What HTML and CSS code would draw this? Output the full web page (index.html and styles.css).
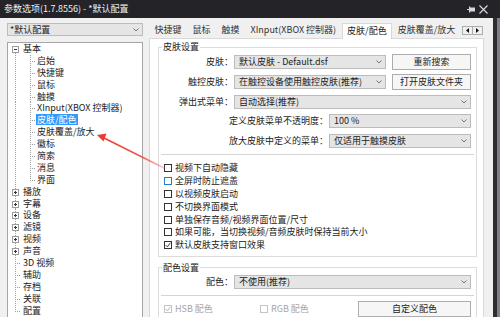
FILE: index.html
```html
<!DOCTYPE html>
<html lang="zh-CN">
<head>
  <meta charset="UTF-8" />
  <meta name="viewport" content="width=device-width, initial-scale=1.0"/>
  <title>参数选项</title>
  <link rel="stylesheet" href="styles.css">
</head>
<body>

  <div class="titlebar">
    <span>参数选项(1.7.8556) - *默认配置</span>
    <span class="caption-btns">
      <svg width="8" height="7" viewBox="0 0 8 7"><path d="M0 3.5h2.5" stroke="#d8d8d8" stroke-width="1"/><rect x="2" y="0.5" width="1.2" height="6" fill="#d8d8d8"/><rect x="3" y="1.5" width="5" height="4" fill="#d8d8d8"/></svg>
      <svg width="9" height="9" viewBox="0 0 9 9"><path d="M0.5 0.5l8 8M8.5 0.5l-8 8" stroke="#dcdcdc" stroke-width="1.1"/></svg>
    </span>
  </div>

  <div class="content">
    <aside class="side">
      <div class="combo profile">
        <span>*默认配置</span>
        <svg class="chev" width="6" height="4" viewBox="0 0 6 4"><path d="M0.5 0.5l2.5 2.5 2.5-2.5" fill="none" stroke="#777"/></svg>
      </div>

      <div class="tree">
        <div class="node open"><i class="exp"></i>基本</div>
        <div class="node sub">启始</div>
        <div class="node sub">快捷键</div>
        <div class="node sub">鼠标</div>
        <div class="node sub">触摸</div>
        <div class="node sub">XInput(XBOX 控制器)</div>
        <div class="node sub"><span class="sel">皮肤/配色</span></div>
        <div class="node sub">皮肤覆盖/放大</div>
        <div class="node sub">徽标</div>
        <div class="node sub">简索</div>
        <div class="node sub">消息</div>
        <div class="node sub end">界面</div>
        <div class="node shut"><i class="exp"></i>播放</div>
        <div class="node shut"><i class="exp"></i>字幕</div>
        <div class="node shut"><i class="exp"></i>设备</div>
        <div class="node shut"><i class="exp"></i>滤镜</div>
        <div class="node shut"><i class="exp"></i>视频</div>
        <div class="node shut"><i class="exp"></i>声音</div>
        <div class="node leaf">3D 视频</div>
        <div class="node leaf">辅助</div>
        <div class="node leaf">存档</div>
        <div class="node leaf">关联</div>
        <div class="node leaf end">配置</div>
      </div>
    </aside>

    <section class="pages">
      <div class="tabs">
        <div class="tab-list">
          <span class="tab">快捷键</span>
          <span class="tab">鼠标</span>
          <span class="tab">触摸</span>
          <span class="tab">XInput(XBOX 控制器)</span>
          <span class="tab active">皮肤/配色</span>
          <span class="tab">皮肤覆盖/放大</span>
        </div>
        <div class="tab-scroll">
          <span><svg width="3" height="5" viewBox="0 0 3 5"><path d="M3 0v5L0 2.5z" fill="#111"/></svg></span>
          <span><svg width="3" height="5" viewBox="0 0 3 5"><path d="M0 0v5l3-2.5z" fill="#111"/></svg></span>
        </div>
      </div>

      <div class="page">
        <fieldset class="group">
          <legend>皮肤设置</legend>
          <div class="rows">
            <div class="row">
              <label>皮肤：</label>
              <div class="combo mid"><span>默认皮肤 - Default.dsf</span><svg class="chev" width="6" height="4" viewBox="0 0 6 4"><path d="M0.5 0.5l2.5 2.5 2.5-2.5" fill="none" stroke="#777"/></svg></div>
              <button class="btn">重新搜索</button>
            </div>
            <div class="row">
              <label>触控皮肤：</label>
              <div class="combo mid"><span>在触控设备使用触控皮肤(推荐)</span><svg class="chev" width="6" height="4" viewBox="0 0 6 4"><path d="M0.5 0.5l2.5 2.5 2.5-2.5" fill="none" stroke="#777"/></svg></div>
              <button class="btn">打开皮肤文件夹</button>
            </div>
            <div class="row">
              <label>弹出式菜单：</label>
              <div class="combo wide"><span>自动选择(推荐)</span><svg class="chev" width="6" height="4" viewBox="0 0 6 4"><path d="M0.5 0.5l2.5 2.5 2.5-2.5" fill="none" stroke="#777"/></svg></div>
            </div>
            <div class="row">
              <label>定义皮肤菜单不透明度：</label>
              <div class="combo short"><span>100 %</span><svg class="chev" width="6" height="4" viewBox="0 0 6 4"><path d="M0.5 0.5l2.5 2.5 2.5-2.5" fill="none" stroke="#777"/></svg></div>
            </div>
            <div class="row">
              <label>放大皮肤中定义的菜单：</label>
              <div class="combo short"><span>仅适用于触摸皮肤</span><svg class="chev" width="6" height="4" viewBox="0 0 6 4"><path d="M0.5 0.5l2.5 2.5 2.5-2.5" fill="none" stroke="#777"/></svg></div>
            </div>
          </div>

          <div class="sep"></div>

          <div class="checks">
            <div class="check"><span class="box"></span>视频下自动隐藏</div>
            <div class="check"><span class="box focus"></span>全屏时防止遮盖</div>
            <div class="check"><span class="box"></span>以视频皮肤启动</div>
            <div class="check"><span class="box"></span>不切换界面模式</div>
            <div class="check"><span class="box"></span>单独保存音频/视频界面位置/尺寸</div>
            <div class="check"><span class="box"></span>如果可能，当切换视频/音频皮肤时保持当前大小</div>
            <div class="check"><span class="box"><svg width="6" height="6" viewBox="0 0 6 6"><path d="M0.6 3l1.8 1.9 3-4.2" fill="none" stroke="#333" stroke-width="0.9"/></svg></span>默认皮肤支持窗口效果</div>
          </div>
        </fieldset>

        <fieldset class="group">
          <legend>配色设置</legend>
          <div class="row">
            <label>配色：</label>
            <div class="combo wide"><span>不使用(推荐)</span><svg class="chev" width="6" height="4" viewBox="0 0 6 4"><path d="M0.5 0.5l2.5 2.5 2.5-2.5" fill="none" stroke="#777"/></svg></div>
          </div>

          <div class="sep"></div>

          <div class="opts">
            <div class="check off"><span class="box"><svg width="6" height="6" viewBox="0 0 6 6"><path d="M0.6 3l1.8 1.9 3-4.2" fill="none" stroke="#b0b0b0" stroke-width="0.9"/></svg></span>HSB 配色</div>
            <div class="check off"><span class="box"></span>RGB 配色</div>
            <button class="btn custom">自定义配色</button>
          </div>
        </fieldset>
      </div>
    </section>

    <div class="edge"></div>
  </div>

  <svg class="callout" width="500" height="317" viewBox="0 0 500 317">
    <defs>
      <linearGradient id="fade" gradientUnits="userSpaceOnUse" x1="98" y1="135" x2="164" y2="168">
        <stop offset="0" stop-color="#ee3a32" stop-opacity="1"/>
        <stop offset="0.65" stop-color="#ee3a32" stop-opacity="0.85"/>
        <stop offset="1" stop-color="#ee3a32" stop-opacity="0.25"/>
      </linearGradient>
    </defs>
    <path d="M102 137L164 168" stroke="url(#fade)" stroke-width="1.6" stroke-linecap="round"/>
    <path d="M97 135L106.5 133.5L103.5 141.5z" fill="#ee3a32"/>
  </svg>

</body>
</html>
```

FILE: styles.css
```css
* {
  box-sizing: border-box;
}

:root {
  --vdot: repeating-linear-gradient(to bottom, #9c9c9c 0 1px, transparent 1px 2px);
  --hdot: repeating-linear-gradient(to right, #9c9c9c 0 1px, transparent 1px 2px);
}

body {
  margin: 0;
  height: 317px;
  overflow: hidden;
  position: relative;
  background: #f0f0f0;
  font-family: "Noto Sans CJK SC", "Noto Sans", sans-serif;
  font-size: 9px;
  color: #222;
}

.titlebar {
  height: 18px;
  display: flex;
  align-items: center;
  padding-left: 4px;
  background: #232328;
  color: #f2f2f2;
  line-height: 12px;
}

.caption-btns {
  margin-left: auto;
  margin-right: 12px;
  display: flex;
  align-items: center;
  gap: 4px;
}

.content {
  display: flex;
  height: 299px;
}

/* left column */

.side {
  width: 143px;
  flex-shrink: 0;
  padding: 5px 0 0 7px;
}

.combo {
  display: flex;
  align-items: center;
  height: 14px;
  padding: 0 3px 0 4px;
  background: #e5e5e5;
  border: 1px solid #bcbcbc;
  line-height: 12px;
  white-space: nowrap;
}

.combo .chev {
  margin-left: auto;
  flex-shrink: 0;
}

.profile {
  height: 13px;
  padding-left: 2px;
}

.tree {
  margin-top: 6px;
  height: 290px;
  background: #fff;
  border: 1px solid #a5a5a5;
}

.node {
  display: flex;
  align-items: flex-start;
  height: 11.9px;
  line-height: 12px;
  padding-left: 15px;
  white-space: nowrap;
}

.exp {
  width: 7px;
  height: 7px;
  margin: 3px 4px 0 0;
  flex-shrink: 0;
  border: 1px solid #9c9c9c;
  background: linear-gradient(#333, #333) center / 3px 1px no-repeat, #fff;
}

.shut .exp {
  background: linear-gradient(#333, #333) center / 3px 1px no-repeat,
              linear-gradient(#333, #333) center / 1px 3px no-repeat, #fff;
}

.node.open {
  padding-left: 4px;
  background: var(--vdot) 7px 6px / 1px 6px no-repeat;
}

.node.shut {
  padding-left: 4px;
  background: var(--vdot) 7px 0 / 1px 12px no-repeat;
}

.node.leaf {
  background: var(--hdot) 7px 6px / 6px 1px no-repeat,
              var(--vdot) 7px 0 / 1px 12px no-repeat;
}

.node.leaf.end {
  background: var(--hdot) 7px 6px / 6px 1px no-repeat,
              var(--vdot) 7px 0 / 1px 7px no-repeat;
}

.node.sub {
  padding-left: 29px;
  background: var(--hdot) 22px 6px / 5px 1px no-repeat,
              var(--vdot) 22px 0 / 1px 12px no-repeat,
              var(--vdot) 7px 0 / 1px 12px no-repeat;
}

.node.sub.end {
  background: var(--hdot) 22px 6px / 5px 1px no-repeat,
              var(--vdot) 22px 0 / 1px 7px no-repeat,
              var(--vdot) 7px 0 / 1px 12px no-repeat;
}

.sel {
  height: 11px;
  margin-left: -1px;
  padding: 0 1px;
  line-height: 11.5px;
  background: #3399ff;
  color: #fff;
}

/* right column */

.pages {
  width: 335px;
  margin-left: 6px;
  flex-shrink: 0;
  display: flex;
  flex-direction: column;
}

.tabs {
  display: flex;
  align-items: flex-end;
  height: 15px;
  margin-top: 5px;
}

.tab-list {
  flex: 1;
  min-width: 0;
  height: 16px;
  margin-bottom: -1px;
  display: flex;
  align-items: flex-end;
  overflow: hidden;
  position: relative;
  z-index: 1;
}

.tab {
  flex-shrink: 0;
  height: 14px;
  margin-bottom: 1px;
  padding: 0 5.5px 2px;
  line-height: 12px;
  color: #333;
  white-space: nowrap;
}

.tab.active {
  height: 16px;
  margin-bottom: 0;
  padding: 0 4.5px 3px;
  line-height: 13px;
  background: #fff;
  border: 1px solid #d9d9d9;
  border-bottom: 0;
  color: #222;
}

.tab-scroll {
  display: flex;
  margin: 0 1px 3px 0;
}

.tab-scroll span {
  width: 11px;
  height: 9px;
  display: flex;
  align-items: center;
  justify-content: center;
  background: #f0f0f0;
  border: 1px solid #adadad;
}

.tab-scroll span + span {
  margin-left: -1px;
}

.page {
  flex: 1;
  background: #fff;
  border: 1px solid #d9d9d9;
  padding: 2px 6px 0 8px;
}

.group {
  margin: 0;
  min-width: 0;
  padding: 0 5px 4px;
  border: 1px solid #dcdcdc;
}

.group + .group {
  margin-top: 5px;
}

.group legend {
  margin-left: -2px;
  padding: 0 1px;
  line-height: 12px;
}

.rows {
  display: flex;
  flex-direction: column;
  gap: 3.75px;
  padding-top: 1px;
}

.row {
  display: flex;
  align-items: center;
  justify-content: flex-end;
  height: 16px;
  line-height: 12px;
}

.row label {
  margin-right: 1px;
  white-space: nowrap;
}

.combo.mid {
  width: 152px;
}

.combo.wide {
  width: 237px;
}

.combo.short {
  width: 142px;
}

.btn {
  width: 79px;
  height: 16px;
  margin-left: 6px;
  padding: 0;
  font: inherit;
  line-height: 12px;
  color: #222;
  background: #f6f6f6;
  border: 1px solid #adadad;
  white-space: nowrap;
}

.sep {
  height: 1px;
  margin: 5px -3px 0;
  background: #d5d5d5;
}

.checks {
  margin-top: 7px;
}

.check {
  display: flex;
  align-items: center;
  height: 12.8px;
  line-height: 12px;
  white-space: nowrap;
}

.box {
  width: 8px;
  height: 8px;
  margin-right: 3px;
  flex-shrink: 0;
  display: flex;
  align-items: center;
  justify-content: center;
  background: #fff;
  border: 1px solid #333;
}

.box.focus {
  border-color: #1e7bd6;
}

.check.off {
  color: #a6a6a6;
}

.check.off .box {
  border-color: #c4c4c4;
}

.group .sep + .opts {
  margin-top: 4.5px;
}

.opts {
  display: flex;
  align-items: center;
  height: 16px;
}

.opts .check {
  width: 96px;
}

.btn.custom {
  width: 113px;
  margin-left: auto;
}

.group .row + .sep {
  margin-top: 5.5px;
}

.edge {
  width: 7px;
  margin-left: auto;
  background: linear-gradient(to right, #2d2d2d 0 4px, #7d8088 4px);
}

.callout {
  position: absolute;
  left: 0;
  top: 0;
  pointer-events: none;
}
```
